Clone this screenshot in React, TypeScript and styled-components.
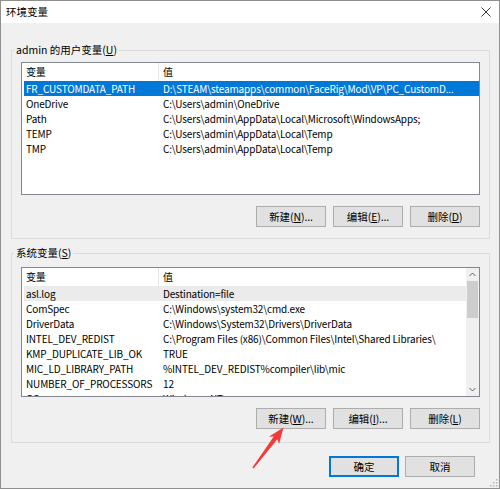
import React from "react";
import styled, { createGlobalStyle } from "styled-components";

const GlobalStyle = createGlobalStyle`
  html, body {
    margin: 0;
    padding: 0;
    background: #fff;
  }
  body {
    font-family: "Noto Sans CJK SC", "Noto Sans", sans-serif;
    font-size: 10.5px;
    color: #000;
  }
`;

const Window = styled.div`
  position: relative;
  width: 500px;
  height: 489px;
  box-sizing: border-box;
  border: 1px solid #8f8f8f;
  background: #f0f0f0;
  display: flex;
  flex-direction: column;
  overflow: hidden;
`;

const TitleBar = styled.div`
  flex: none;
  height: 22px;
  background: #fff;
  display: flex;
  align-items: center;
  justify-content: space-between;
  padding: 0 8px 0 5px;
`;

const Title = styled.span`
  font-size: 10.5px;
  line-height: 22px;
`;

const Body = styled.div`
  flex: 1;
  display: flex;
  flex-direction: column;
  padding: 20px 9px 0 10px;
`;

const Group = styled.fieldset<{ $pt: number; $pb: number; $mt?: number }>`
  margin: ${(p) => p.$mt ?? 0}px 0 0;
  min-width: 0;
  border: 1px solid #dcdcdc;
  padding: ${(p) => p.$pt}px 9px ${(p) => p.$pb}px;
  display: flex;
  flex-direction: column;
`;

const Legend = styled.legend`
  padding: 0 2px;
  margin-left: -7px;
  line-height: 14px;
  font-size: 10.5px;
`;

const List = styled.div<{ $h: number }>`
  height: ${(p) => p.$h}px;
  box-sizing: border-box;
  border: 1px solid #828790;
  background: #fff;
  padding-left: 2px;
  display: flex;
  overflow: hidden;
  font-size: 10px;
  letter-spacing: -0.15px;
`;

const Table = styled.div`
  flex: 1;
  overflow: hidden;
`;

const HeaderRow = styled.div`
  display: grid;
  grid-template-columns: 134px 307px;
  height: 18px;
  line-height: 18px;
`;

const HeadCell = styled.div<{ $first?: boolean }>`
  padding-left: ${(p) => (p.$first ? 2 : 4)}px;
  border-left: ${(p) => (p.$first ? "none" : "1px solid #e5e5e5")};
  white-space: nowrap;
  overflow: hidden;
`;

const Row = styled.div<{ $state?: "selected" | "inactive" }>`
  display: grid;
  grid-template-columns: 134px 307px;
  height: 15px;
  line-height: 15px;
  background: ${(p) =>
    p.$state === "selected" ? "#0078d7" : p.$state === "inactive" ? "#ebebeb" : "transparent"};
  color: ${(p) => (p.$state === "selected" ? "#fff" : "#000")};
`;

const Cell = styled.div<{ $first?: boolean }>`
  padding-left: ${(p) => (p.$first ? 2 : 5)}px;
  white-space: nowrap;
  overflow: hidden;
`;

const ScrollBar = styled.div`
  flex: none;
  width: 13px;
  background: #f0f0f0;
  display: flex;
  flex-direction: column;
`;

const ScrollArrow = styled.div`
  flex: none;
  height: 13px;
  display: flex;
  align-items: center;
  justify-content: center;
`;

const Thumb = styled.div`
  flex: none;
  height: 37px;
  margin: 0 1px;
  background: #cdcdcd;
`;

const Track = styled.div`
  flex: 1;
`;

const ButtonRow = styled.div<{ $gap: number; $mt: number; $pr?: number }>`
  display: flex;
  justify-content: flex-end;
  gap: ${(p) => p.$gap}px;
  margin-top: ${(p) => p.$mt}px;
  padding-right: ${(p) => p.$pr ?? 0}px;
`;

const Button = styled.button<{ $default?: boolean }>`
  width: 70px;
  height: 21px;
  box-sizing: border-box;
  padding: 0;
  border: 1px solid ${(p) => (p.$default ? "#0078d7" : "#adadad")};
  box-shadow: ${(p) => (p.$default ? "inset 0 0 0 1px #0078d7" : "none")};
  background: #e1e1e1;
  font-family: inherit;
  font-size: 10.5px;
  letter-spacing: -0.1px;
  color: #000;
  line-height: 19px;
`;

const Overlay = styled.svg`
  position: absolute;
  pointer-events: none;
`;

const userVars: [string, string][] = [
  ["FR_CUSTOMDATA_PATH", "D:\\STEAM\\steamapps\\common\\FaceRig\\Mod\\VP\\PC_CustomD..."],
  ["OneDrive", "C:\\Users\\admin\\OneDrive"],
  ["Path", "C:\\Users\\admin\\AppData\\Local\\Microsoft\\WindowsApps;"],
  ["TEMP", "C:\\Users\\admin\\AppData\\Local\\Temp"],
  ["TMP", "C:\\Users\\admin\\AppData\\Local\\Temp"],
];

const sysVars: [string, string][] = [
  ["asl.log", "Destination=file"],
  ["ComSpec", "C:\\Windows\\system32\\cmd.exe"],
  ["DriverData", "C:\\Windows\\System32\\Drivers\\DriverData"],
  ["INTEL_DEV_REDIST", "C:\\Program Files (x86)\\Common Files\\Intel\\Shared Libraries\\"],
  ["KMP_DUPLICATE_LIB_OK", "TRUE"],
  ["MIC_LD_LIBRARY_PATH", "%INTEL_DEV_REDIST%compiler\\lib\\mic"],
  ["NUMBER_OF_PROCESSORS", "12"],
  ["OS", "Windows_NT"],
];

function VarTable({ rows, active }: { rows: [string, string][]; active?: "selected" | "inactive" }) {
  return (
    <Table>
      <HeaderRow>
        <HeadCell $first>变量</HeadCell>
        <HeadCell>值</HeadCell>
      </HeaderRow>
      {rows.map(([k, v], i) => (
        <Row key={k} $state={i === 0 ? active : undefined}>
          <Cell $first>{k}</Cell>
          <Cell>{v}</Cell>
        </Row>
      ))}
    </Table>
  );
}

const Chevron = ({ up }: { up?: boolean }) => (
  <svg width="7" height="5" viewBox="0 0 7 5">
    <path d={up ? "M0.5 4 L3.5 1 L6.5 4" : "M0.5 1 L3.5 4 L6.5 1"} fill="none" stroke="#606060" strokeWidth="1" />
  </svg>
);

const Accel = ({ label, k, dots }: { label: string; k: string; dots?: boolean }) => (
  <>
    {label}(<u>{k}</u>){dots ? "..." : ""}
  </>
);

export default function App() {
  return (
    <>
      <GlobalStyle />
      <Window>
        <TitleBar>
          <Title>环境变量</Title>
          <svg width="10" height="10" viewBox="0 0 10 10">
            <path d="M0.5 0.5 L9.5 9.5 M9.5 0.5 L0.5 9.5" stroke="#333" strokeWidth="1" />
          </svg>
        </TitleBar>
        <Body>
          <Group $pt={5} $pb={11}>
            <Legend>admin 的用户变量(<u>U</u>)</Legend>
            <List $h={133}>
              <VarTable rows={userVars} active="selected" />
            </List>
            <ButtonRow $gap={7} $mt={11}>
              <Button><Accel label="新建" k="N" dots /></Button>
              <Button><Accel label="编辑" k="E" dots /></Button>
              <Button><Accel label="删除" k="D" /></Button>
            </ButtonRow>
          </Group>
          <Group $pt={7} $pb={13} $mt={7}>
            <Legend>系统变量(<u>S</u>)</Legend>
            <List $h={130}>
              <VarTable rows={sysVars} active="inactive" />
              <ScrollBar>
                <ScrollArrow><Chevron up /></ScrollArrow>
                <Thumb />
                <Track />
                <ScrollArrow><Chevron /></ScrollArrow>
              </ScrollBar>
            </List>
            <ButtonRow $gap={7} $mt={11}>
              <Button><Accel label="新建" k="W" dots /></Button>
              <Button><Accel label="编辑" k="I" dots /></Button>
              <Button><Accel label="删除" k="L" /></Button>
            </ButtonRow>
          </Group>
          <ButtonRow $gap={6} $mt={13} $pr={15}>
            <Button $default>确定</Button>
            <Button>取消</Button>
          </ButtonRow>
        </Body>
        <Overlay style={{ left: 247, top: 423 }} width="40" height="48" viewBox="248 424 40 48">
          <polygon
            points="283.5,427.5 279,444 277.3,439.2 253.6,468.4 252.4,467.6 273.8,436.6 268.8,436.8"
            fill="#f23a3a"
          />
        </Overlay>
        <Overlay style={{ right: 1, bottom: 1 }} width="8" height="8" viewBox="0 0 8 8">
          <g fill="#b8b8b8">
            <rect x="6" y="0" width="1.5" height="1.5" />
            <rect x="3" y="3" width="1.5" height="1.5" />
            <rect x="6" y="3" width="1.5" height="1.5" />
            <rect x="0" y="6" width="1.5" height="1.5" />
            <rect x="3" y="6" width="1.5" height="1.5" />
            <rect x="6" y="6" width="1.5" height="1.5" />
          </g>
        </Overlay>
      </Window>
    </>
  );
}
